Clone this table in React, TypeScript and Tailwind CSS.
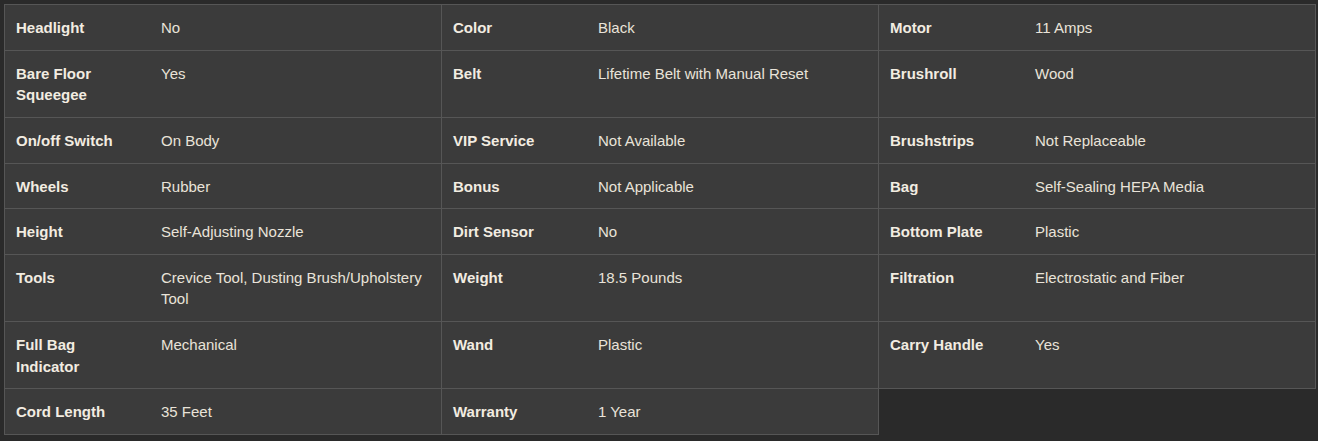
import React from "react";

const col1: [string, string][] = [
  ["Headlight", "No"],
  ["Bare Floor Squeegee", "Yes"],
  ["On/off Switch", "On Body"],
  ["Wheels", "Rubber"],
  ["Height", "Self-Adjusting Nozzle"],
  ["Tools", "Crevice Tool, Dusting Brush/Upholstery Tool"],
  ["Full Bag Indicator", "Mechanical"],
  ["Cord Length", "35 Feet"],
];
const col2: [string, string][] = [
  ["Color", "Black"],
  ["Belt", "Lifetime Belt with Manual Reset"],
  ["VIP Service", "Not Available"],
  ["Bonus", "Not Applicable"],
  ["Dirt Sensor", "No"],
  ["Weight", "18.5 Pounds"],
  ["Wand", "Plastic"],
  ["Warranty", "1 Year"],
];
const col3: [string, string][] = [
  ["Motor", "11 Amps"],
  ["Brushroll", "Wood"],
  ["Brushstrips", "Not Replaceable"],
  ["Bag", "Self-Sealing HEPA Media"],
  ["Bottom Plate", "Plastic"],
  ["Filtration", "Electrostatic and Fiber"],
  ["Carry Handle", "Yes"],
];

function Cell({ item }: { item?: [string, string] }) {
  if (!item) return <div />;
  return (
    <div className="flex bg-[#3b3b3b] border-r border-b border-[#565656] pt-[12px] pb-[11px]">
      <div className="w-[145px] shrink-0 pl-[11px] pr-[19px] font-bold text-[#f2ece1]">{item[0]}</div>
      <div className="flex-1 pl-[11px] pr-[13px] text-[#e9e3d9]">{item[1]}</div>
    </div>
  );
}

export default function App() {
  const rows = [] as React.ReactNode[];
  for (let i = 0; i < 8; i++) {
    rows.push(<Cell key={`a${i}`} item={col1[i]} />);
    rows.push(<Cell key={`b${i}`} item={col2[i]} />);
    rows.push(<Cell key={`c${i}`} item={col3[i]} />);
  }
  return (
    <div
      className="min-h-[441px] w-full bg-[#2a2a2a] pt-[4px] pl-[4px]"
      style={{ fontFamily: '"Liberation Sans", Arial, sans-serif' }}
    >
      <div className="grid w-fit grid-cols-[repeat(3,437px)] border-t border-l border-[#565656] text-[15px] leading-[21.64px]">
        {rows}
      </div>
    </div>
  );
}
